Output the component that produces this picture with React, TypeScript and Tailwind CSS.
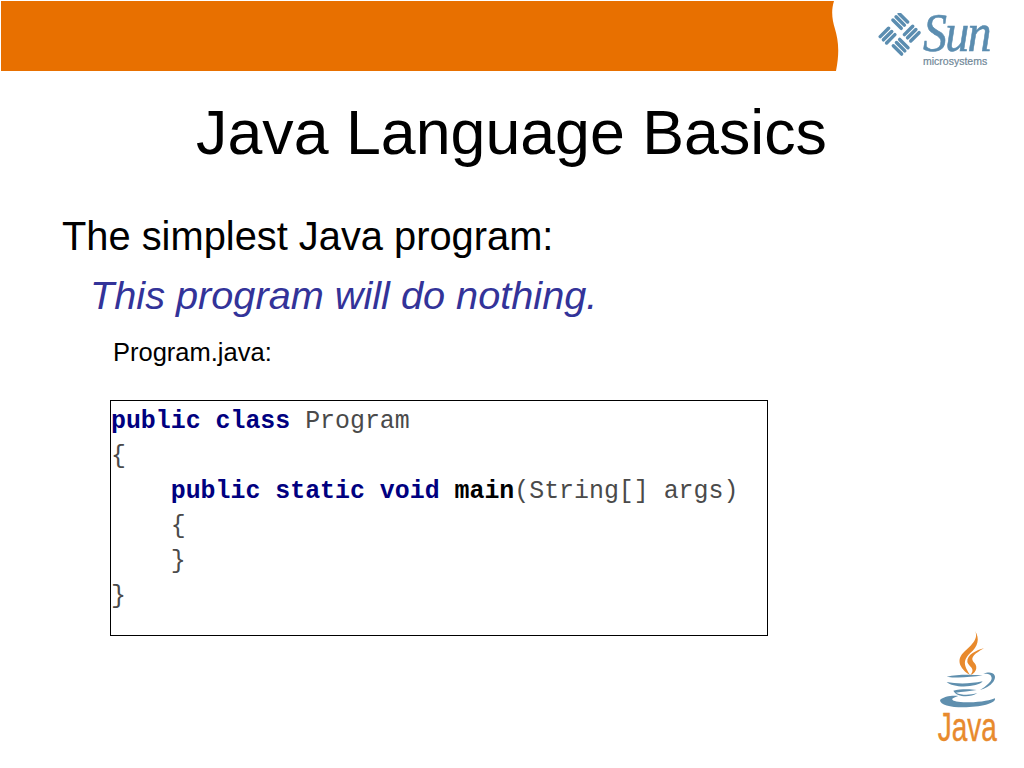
import React from 'react'

const SANS = "font-['Liberation_Sans',Arial,sans-serif]"
const MONO = "font-['Liberation_Mono','Courier_New',monospace]"

// ─── Logos ────────────────────────────────────────────────────────────────────

function SunMark() {
  // Pinwheel of four bar groups on a square, turned 45deg into a diamond
  const bars = [
    'M1.5 2 H12', 'M1.5 6 H12', 'M1.5 10 H12',
    'M18 1.5 V12', 'M22 1.5 V12', 'M26 1.5 V12',
    'M18 18 H28.5', 'M18 22 H28.5', 'M18 26 H28.5',
    'M12 18 V28.5', 'M8 18 V28.5', 'M4 18 V28.5',
  ]
  return (
    <svg width="44" height="44" viewBox="0 0 44 44" className="shrink-0">
      <g transform="rotate(45 22 22) translate(21.5 22) scale(1.12) translate(-15 -15)" fill="none" stroke="#5b8db0" strokeWidth="3.1" strokeLinecap="round">
        {bars.map((d) => (
          <path key={d} d={d} />
        ))}
      </g>
    </svg>
  )
}

function SunLogo() {
  return (
    <div className="flex items-start mt-[13px] ml-[39px]">
      <SunMark />
      <div className="flex flex-col items-start w-[70px] ml-[1px]">
        <span className="font-['Liberation_Serif',serif] italic text-[54px] leading-[40px] tracking-[-2px] text-[#5b8db0] [-webkit-text-stroke:0.6px_#5b8db0] scale-x-[0.89] origin-left">
          Sun
        </span>
        <span className={`${SANS} text-[10.5px] leading-[10px] mt-[3px] text-[#6f8797] [-webkit-text-stroke:0.2px_#6f8797]`}>microsystems</span>
      </div>
    </div>
  )
}

function JavaLogo() {
  return (
    <div className="flex flex-col items-center w-[100px]">
      <svg width="100" height="90" viewBox="0 0 300 270">
        <g fill="#e88a2d">
          <path d="M165 32 C178 58 150 78 130 98 C105 123 125 150 150 165 C135 140 125 125 150 100 C175 78 180 56 165 32 Z" />
          <path d="M192 85 C170 90 140 105 142 125 C145 140 170 145 150 166 C175 155 172 135 160 125 C150 113 165 100 192 85 Z" />
        </g>
        <g fill="#5f8fae">
          <path d="M80 170 C110 163 150 163 188 166 C150 172 110 175 80 170 Z" />
          <path d="M80 186 C110 192 150 192 188 184 C175 202 100 206 80 186 Z" />
          <path d="M100 212 C120 207 150 207 170 210 C150 214 125 215 108 218 C125 226 150 226 172 219 C150 234 110 232 100 212 Z" />
          <path d="M60 240 C70 228 100 225 115 228 C90 235 85 245 140 247 C180 248 215 240 225 235 C230 250 180 262 130 262 C90 262 60 255 60 240 Z" />
          <path d="M190 162 C215 150 235 165 220 185 C210 198 195 205 180 210 C200 198 215 185 215 175 C215 162 200 160 190 162 Z" />
        </g>
      </svg>
      <span className={`${SANS} text-[#e88a2d] text-[40px] leading-[32px] scale-x-[0.7] [-webkit-text-stroke:0.4px_#e88a2d] mt-[1px] -ml-[5px]`}>Java</span>
    </div>
  )
}

// ─── Code ─────────────────────────────────────────────────────────────────────

const KW = 'font-bold text-[#000080]'
const TX = 'text-[#4a4a4a]'

function CodeBox() {
  return (
    <div className={`${MONO} w-[658px] h-[236px] ml-[110px] mt-[33px] border border-black text-[24.9px] leading-[35px] pt-[3px] whitespace-pre`}>
      <div>
        <span className={KW}>public class</span>
        <span className={TX}> Program</span>
      </div>
      <div className={TX}>{'{'}</div>
      <div>
        <span className={KW}>{'    public static void'}</span>
        <span className="font-bold text-black"> main</span>
        <span className={TX}>(String[] args)</span>
      </div>
      <div className={TX}>{'    {'}</div>
      <div className={TX}>{'    }'}</div>
      <div className={TX}>{'}'}</div>
    </div>
  )
}

// ─── Slide ────────────────────────────────────────────────────────────────────

export default function App() {
  return (
    <div className={`${SANS} relative w-[1024px] h-[768px] bg-white text-black overflow-hidden`}>
      <div className="flex h-[71px]">
        <div className="ml-[1px] mt-[1px] w-[830px] h-[70px] bg-[#e87000]" />
        <svg width="8" height="71" viewBox="0 0 8 71" className="shrink-0 mt-[1px]">
          <path d="M0 0 H3 C0 10 1 18 4 28 C7 38 9 50 5 70 H0 Z" fill="#e87000" />
        </svg>
        <SunLogo />
      </div>

      <h1 className="text-center text-[62.7px] leading-[74px] mt-[24px] -ml-[1px]">Java Language Basics</h1>

      <p className="text-[39.85px] leading-[46px] mt-[44px] ml-[62px]">The simplest Java program:</p>
      <p className="text-[39.7px] leading-[46px] mt-[13px] ml-[90px] italic text-[#333399]">This program will do nothing.</p>
      <p className="text-[25.5px] leading-[30px] mt-[19px] ml-[113px]">Program.java:</p>

      <CodeBox />

      <div className="absolute left-[920px] top-[620px]">
        <JavaLogo />
      </div>
    </div>
  )
}
